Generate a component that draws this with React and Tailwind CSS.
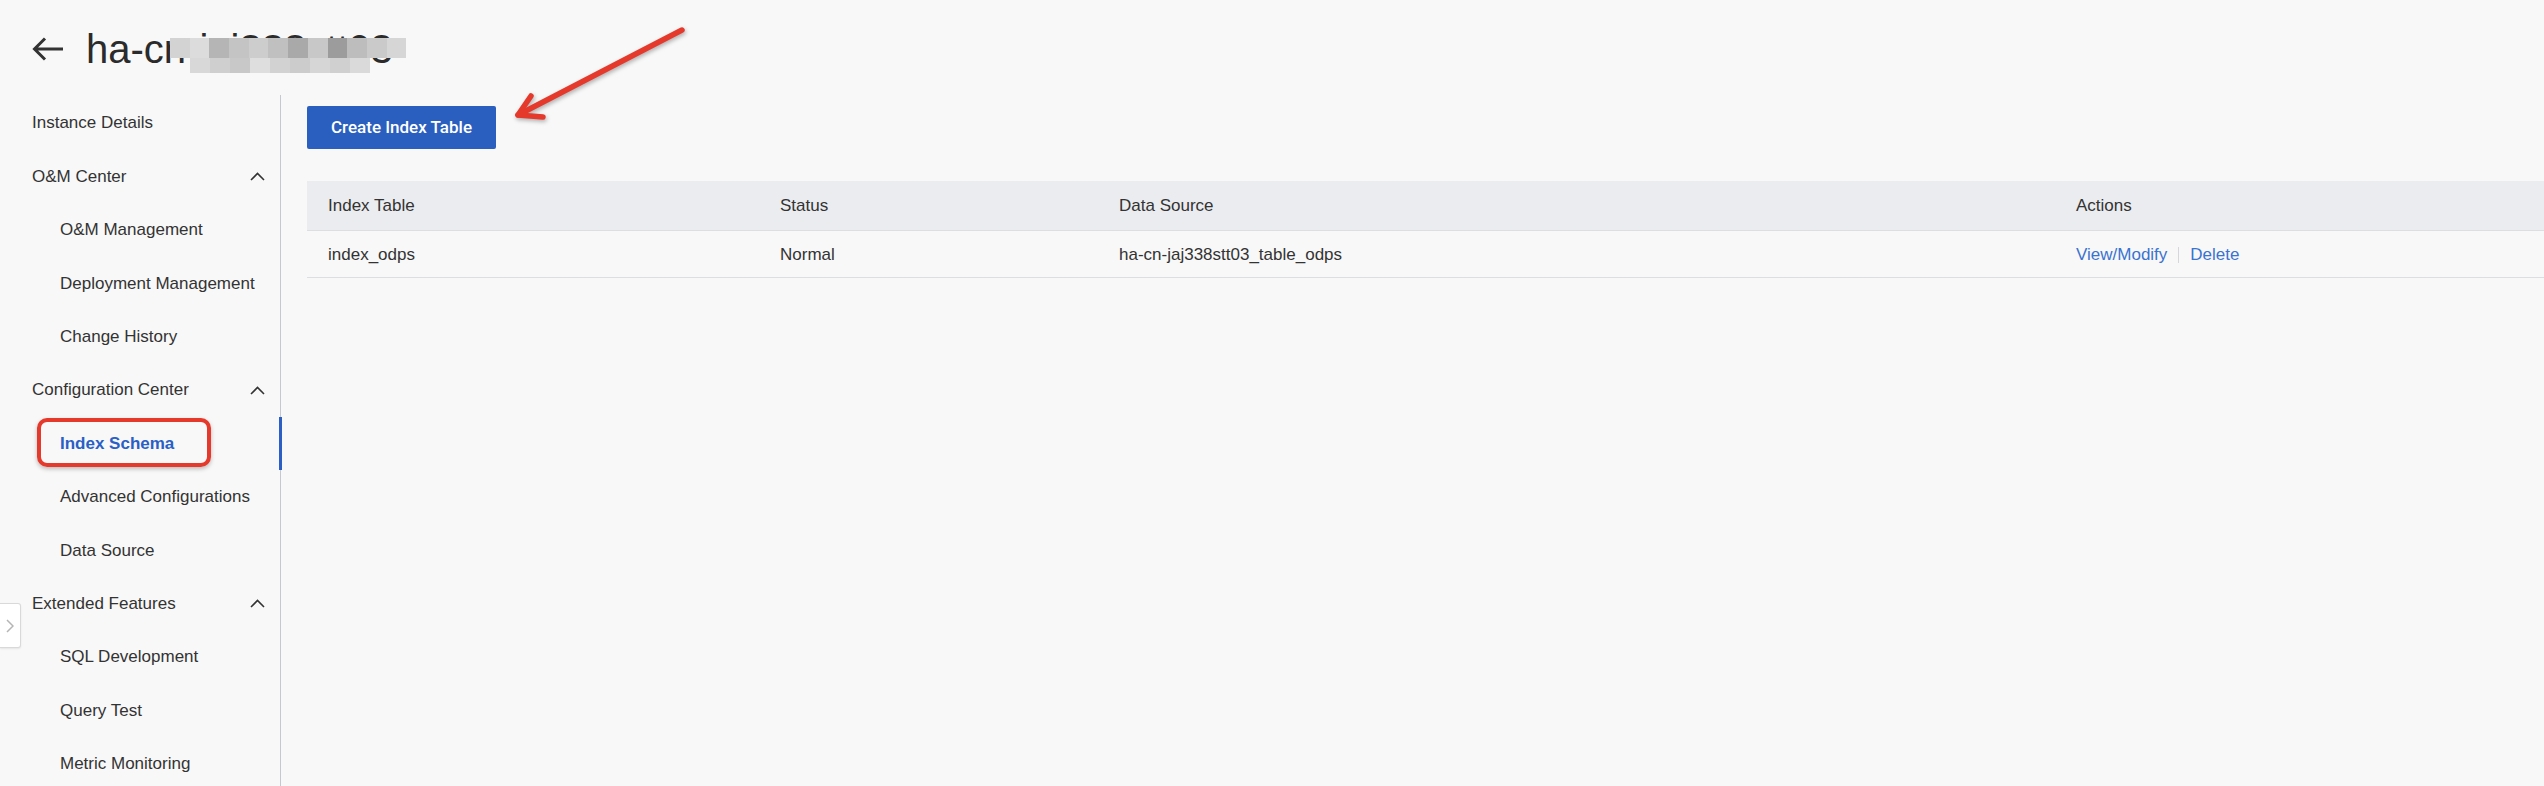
import React from 'react';

const navItems = [
  { label: 'Instance Details', level: 0 },
  { label: 'O&M Center', level: 0, group: true },
  { label: 'O&M Management', level: 1 },
  { label: 'Deployment Management', level: 1 },
  { label: 'Change History', level: 1 },
  { label: 'Configuration Center', level: 0, group: true },
  { label: 'Index Schema', level: 1, active: true },
  { label: 'Advanced Configurations', level: 1 },
  { label: 'Data Source', level: 1 },
  { label: 'Extended Features', level: 0, group: true },
  { label: 'SQL Development', level: 1 },
  { label: 'Query Test', level: 1 },
  { label: 'Metric Monitoring', level: 1 },
];

// pixelated blur over the instance id
const mosaicTop = ['#d3d3d3', '#dcdcdc', '#b5b5b5', '#c4c4c4', '#cdcdcd', '#c0c0c0', '#a9a9a9', '#c8c8c8', '#9c9c9c', '#bdbdbd', '#cacaca', '#d6d6d6'];
const mosaicBottom = ['#d8d8d8', '#cfcfcf', '#c8c8c8', '#dedede', '#d2d2d2', '#cccccc', '#d6d6d6', '#d0d0d0', '#dadada'];

function ChevronUp() {
  return (
    <svg width="15" height="9" viewBox="0 0 15 9" fill="none">
      <path d="M1 8 L7.5 1.5 L14 8" stroke="#333" strokeWidth="1.6" />
    </svg>
  );
}

function NavItem({ item }) {
  const base = 'relative flex items-center h-[53.4px] text-[17px]';
  if (item.group) {
    return (
      <div className={`${base} pl-[32px] pr-[15px] justify-between`}>
        <span>{item.label}</span>
        <ChevronUp />
      </div>
    );
  }
  if (item.active) {
    return (
      <div className={`${base} pl-[60px] font-bold text-[#2a5fc5]`}>
        <span>{item.label}</span>
        <span className="absolute right-[-2px] top-0 bottom-0 w-[3px] bg-[#2a5fc5]" />
        {/* annotation box */}
        <span className="absolute left-[37px] top-[1px] w-[174px] h-[49px] rounded-[10px] border-[4px] border-[#e5392c] shadow-[0_2px_4px_rgba(0,0,0,0.25)]" />
      </div>
    );
  }
  return (
    <div className={`${base} ${item.level ? 'pl-[60px]' : 'pl-[32px]'}`}>
      <span>{item.label}</span>
    </div>
  );
}

export default function App() {
  return (
    <div className="relative min-h-screen w-full overflow-hidden bg-[#f8f8f8] text-[#333] font-['Liberation_Sans',Arial,sans-serif]">
      {/* Title bar */}
      <header className="h-[95px] flex items-center pl-[32px] gap-[22px] pt-[3px]">
        <svg width="32" height="24" viewBox="0 0 32 24" fill="none">
          <path d="M31 12H2.5 M13 1.5 L2.5 12 L13 22.5" stroke="#333" strokeWidth="3" />
        </svg>
        <span className="relative text-[40px] leading-none text-[#2b2b2b]">
          ha-cn-jaj338stt03
          <span className="absolute left-[84px] top-[9px] flex flex-col">
            <span className="flex">
              {mosaicTop.map((c, i) => (
                <span key={i} className="w-[19.7px] h-[20px]" style={{ background: c }} />
              ))}
            </span>
            <span className="flex ml-[20px]">
              {mosaicBottom.map((c, i) => (
                <span key={i} className="w-[20px] h-[15px]" style={{ background: c }} />
              ))}
            </span>
          </span>
        </span>
      </header>

      <div className="flex">
        {/* Sidebar */}
        <aside className="w-[281px] shrink-0 border-r border-[#c5c8ce] min-h-[700px] pt-[1.5px]">
          {navItems.map((item) => (
            <NavItem key={item.label} item={item} />
          ))}
        </aside>

        {/* Content */}
        <main className="flex-1 pl-[26px] pt-[11px]">
          <button className="w-[189px] h-[43px] rounded-[2px] bg-[#2a5fbf] text-white text-[17px] font-medium font-['Roboto',Arial,sans-serif]">
            Create Index Table
          </button>

          <div className="mt-[32px] text-[17px]">
            <div className="grid grid-cols-[452px_339px_957px_1fr] h-[50px] items-center bg-[#ebecef] border-b border-[#dcdee2]">
              <div className="pl-[21px]">Index Table</div>
              <div className="pl-[21px]">Status</div>
              <div className="pl-[21px]">Data Source</div>
              <div className="pl-[21px]">Actions</div>
            </div>
            <div className="grid grid-cols-[452px_339px_957px_1fr] h-[47px] items-center border-b border-[#dcdee2] pt-[1px]">
              <div className="pl-[21px]">index_odps</div>
              <div className="pl-[21px]">Normal</div>
              <div className="pl-[21px]">ha-cn-jaj338stt03_table_odps</div>
              <div className="pl-[21px] flex items-center text-[#3a73d0]">
                <span>View/Modify</span>
                <span className="mx-[11px] w-px h-[16px] bg-[#d5d7db]" />
                <span>Delete</span>
              </div>
            </div>
          </div>
        </main>
      </div>

      {/* collapse tab */}
      <div className="absolute left-0 top-[603px] w-[21px] h-[45px] flex items-center justify-center bg-white border border-l-0 border-[#d9d9d9] rounded-r-[3px] shadow-[0_1px_2px_rgba(0,0,0,0.08)]">
        <svg width="8" height="14" viewBox="0 0 8 14" fill="none">
          <path d="M1 1 L7 7 L1 13" stroke="#b5b5b5" strokeWidth="1.5" />
        </svg>
      </div>

      {/* annotation arrow */}
      <svg className="absolute left-0 top-0 pointer-events-none" width="720" height="140" viewBox="0 0 720 140" fill="none">
        <g stroke="#e5392c" strokeWidth="5.5" strokeLinecap="round" strokeLinejoin="round" style={{ filter: 'drop-shadow(1px 2px 2px rgba(0,0,0,0.3))' }}>
          <path d="M682 30 L518 115" />
          <path d="M531 96 L518 115 L543 117" />
        </g>
      </svg>
    </div>
  );
}
